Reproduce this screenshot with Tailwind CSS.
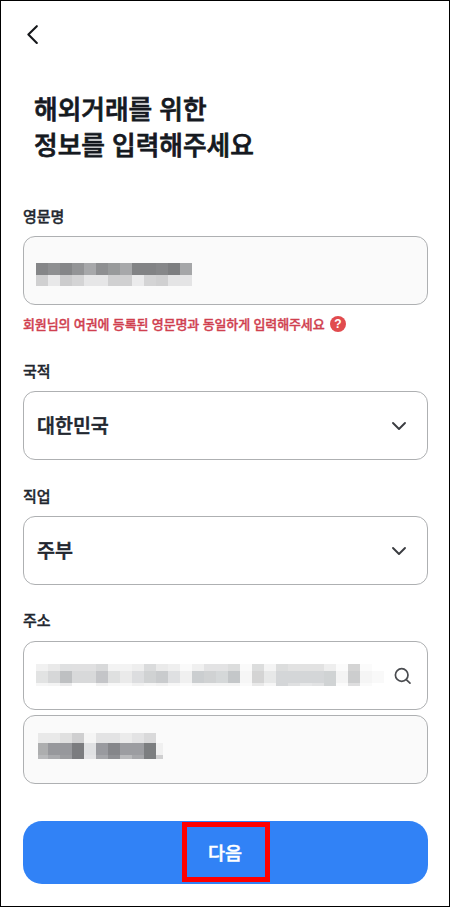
<!DOCTYPE html>
<html lang="ko">

<head>
  <meta charset="UTF-8" />
  <meta name="viewport" content="width=device-width, initial-scale=1.0" />
  <title>해외거래 정보 입력</title>
  <script src="https://cdn.jsdelivr.net/npm/@tailwindcss/browser@4"></script>
</head>

<body class="bg-white font-['Noto_Sans_CJK_KR',sans-serif] text-[#22272f]">
  <div class="w-[450px] h-[907px] border border-black px-[22px] flex flex-col overflow-hidden">

    <!-- Header -->
    <header class="pt-6 h-[89px] shrink-0">
      <button type="button" aria-label="뒤로" class="block">
        <svg class="w-5 h-5" viewBox="0 0 20 20" fill="none" stroke="#15171a" stroke-width="2.1" stroke-linecap="round" stroke-linejoin="round">
          <path d="M13.8 1.2 L5.4 9.6 L13.8 18" />
        </svg>
      </button>
    </header>

    <h1 class="pl-[11px] text-[25.7px] leading-9 font-medium text-[#15191f] [-webkit-text-stroke:0.75px_#15191f]">
      해외거래를 위한<br />정보를 입력해주세요
    </h1>

    <main class="mt-[43px] flex flex-col">
      <!-- English name -->
      <section>
        <h2 class="h-[31px] text-[15px] leading-[22px] font-medium [-webkit-text-stroke:0.35px_#22272f]">영문명</h2>
        <div class="w-[405px] h-[69px] border border-[#aeb0b2] rounded-xl bg-[#fafafa] pl-3 pt-[26px]">
          <svg id="nameMosaic" class="block w-[157px] h-6" shape-rendering="crispEdges"></svg>
        </div>
        <div class="mt-[9px] h-5 flex items-center gap-[5px]">
          <p class="w-[302px] text-[13px] leading-5 tracking-[-0.13px] font-medium text-[#d0404f] whitespace-nowrap [-webkit-text-stroke:0.35px_#d0404f]">회원님의 여권에 등록된 영문명과 동일하게 입력해주세요</p>
          <span class="w-4 h-4 rounded-full bg-[#e14b4e] text-white text-[12px] leading-4 font-bold text-center font-['Liberation_Sans',sans-serif]">?</span>
        </div>
      </section>

      <!-- Nationality -->
      <section class="mt-[26px]">
        <h2 class="h-[31px] text-[15px] leading-[22px] font-medium [-webkit-text-stroke:0.35px_#22272f]">국적</h2>
        <div class="w-[405px] h-[69px] border border-[#aeb0b2] rounded-xl pl-[13px] pr-5 flex items-center justify-between">
          <span class="pb-0.5 text-[19.5px] leading-7 font-medium [-webkit-text-stroke:0.55px_#22272f]">대한민국</span>
          <svg class="w-4 h-4" viewBox="0 0 16 16" fill="none" stroke="#3a3c40" stroke-width="1.9" stroke-linecap="round" stroke-linejoin="round">
            <path d="M2 5 L8 11 L14 5" />
          </svg>
        </div>
      </section>

      <!-- Job -->
      <section class="mt-[25px]">
        <h2 class="h-[31px] text-[15px] leading-[22px] font-medium [-webkit-text-stroke:0.35px_#22272f]">직업</h2>
        <div class="w-[405px] h-[69px] border border-[#aeb0b2] rounded-xl pl-[13px] pr-5 flex items-center justify-between">
          <span class="pb-0.5 text-[19.5px] leading-7 font-medium [-webkit-text-stroke:0.55px_#22272f]">주부</span>
          <svg class="w-4 h-4" viewBox="0 0 16 16" fill="none" stroke="#3a3c40" stroke-width="1.9" stroke-linecap="round" stroke-linejoin="round">
            <path d="M2 5 L8 11 L14 5" />
          </svg>
        </div>
      </section>

      <!-- Address -->
      <section class="mt-6">
        <h2 class="h-[32px] text-[15px] leading-[22px] font-medium [-webkit-text-stroke:0.35px_#22272f]">주소</h2>
        <div class="w-[405px] h-[69px] border border-[#aeb0b2] rounded-xl pl-3 pr-[14px] flex items-center justify-between">
          <svg id="addressMosaic" class="block w-[350px] h-6" shape-rendering="crispEdges"></svg>
          <svg class="w-5 h-5" viewBox="0 0 20 20" fill="none" stroke="#4a4c50" stroke-width="1.7" stroke-linecap="round">
            <circle cx="8.7" cy="9" r="6.3" />
            <path d="M13.3 13.6 L17 17.2" />
          </svg>
        </div>
        <div class="mt-[5px] w-[405px] h-[69px] border border-[#aeb0b2] rounded-xl bg-[#fafafa] pl-[14px] pt-[17px]">
          <svg id="detailMosaic" class="block w-[126px] h-[27px]" shape-rendering="crispEdges"></svg>
        </div>
      </section>
    </main>

    <!-- Next -->
    <button type="button" class="mt-[37px] w-[405px] h-[63px] shrink-0 rounded-[19px] bg-[#3182f6] flex justify-center">
      <span class="mt-px ml-px w-[88px] h-[60px] border-[5px] border-[#fe0000] flex items-center justify-center pr-0.5 text-[18.5px] leading-7 font-medium text-white [-webkit-text-stroke:0.45px_#ffffff]">다음</span>
    </button>
  </div>

  <!-- Mosaic over the private fields -->
  <script>
    // rows: [y, height, colors], cells: x edges
    function drawMosaic(id, edges, rows) {
      const svg = document.getElementById(id);
      rows.forEach(([y, h, colors]) => {
        colors.split(' ').forEach((color, i) => {
          if (color === '-') return;
          const rect = document.createElementNS('http://www.w3.org/2000/svg', 'rect');
          rect.setAttribute('x', edges[i]);
          rect.setAttribute('y', y);
          rect.setAttribute('width', edges[i + 1] - edges[i]);
          rect.setAttribute('height', h);
          rect.setAttribute('fill', '#' + color);
          svg.appendChild(rect);
        });
      });
    }

    const steps = (n) => Array.from({ length: n + 1 }, (_, i) => i * 12);

    drawMosaic('nameMosaic', steps(13), [
      [0, 12, '858688 8e8f91 858688 939496 a7a8aa 8e8f91 989a9b a7a8aa 828385 828385 868789 7d7e80 a5a6a8'],
      [12, 11, 'd0d0d1 e8e8e9 cccccd d4d4d5 e6e6e7 e6e6e7 d0d0d1 d0d0d1 ebebec d4d4d5 d0d0d1 e4e4e5 e4e4e5'],
    ]);

    drawMosaic('addressMosaic', steps(29), [
      [0, 7, 'f1f1f1 e9e9e9 dfe0e1 e0e0e1 e0e0e1 d8d9da f3f3f3 f3f3f3 eeeeee dadbdc eaeaea efefef fafafa f0f0f0 e3e3e4 e3e3e4 dcdddd fafafa dcdddd f4f4f4 dcdddd e2e2e2 e2e2e2 e2e2e2 eeeeee fbfbfb d4d4d4 fbfbfb -'],
      [7, 12, 'e2e3e3 d6d7d8 bec0c2 d8d9da d8d9da c4c5c8 dfe0e0 eaeaea dcdddf d0d2d3 c9cbcd dfe0e2 f0f0f0 cbced0 d0d2d3 d5d8d9 c4c7c9 f6f6f6 d4d4d4 e7e8e8 d4d6d8 d4d6d8 d4d6d8 d4d6d8 d0d3d4 f4f4f4 cccdce f5f5f5 f9f9f9'],
      [19, 3, 'f6f6f6 f4f4f4 ebebec fdfdfd fdfdfd f1f1f1 f8f8f8 f8f8f8 f1f1f1 f5f5f5 f1f1f1 f7f7f7 fafafa f4f4f4 f4f4f4 f4f4f4 f4f4f4 fafafa e9e9e9 f6f6f6 d4d6d8 dfe0e1 e6e7e8 e2e3e4 d0d3d4 fbfbfb dededf fafafa -'],
    ]);

    drawMosaic('detailMosaic', [0, 10, 22, 34, 46, 58, 70, 82, 94, 106, 118, 125], [
      [0, 10, 'e9e9e9 e9e9e9 e0e0e0 cfcfd0 f5f5f5 e3e3e4 e3e3e4 ebebeb e3e3e4 d9d9da -'],
      [10, 12, 'adaeaf 97989c 97989c 7b7c7f e0e1e3 999a9f 85868a 9c9da1 9c9da1 7c7e80 f0f0f0'],
      [22, 4, 'b8b9bb a9aaad 9c9da0 7b7c7f e4e4e6 a5a6aa 8f9094 b9babc a6a7aa 7c7e80 cfcfd0'],
    ]);
  </script>

</body>

</html>
